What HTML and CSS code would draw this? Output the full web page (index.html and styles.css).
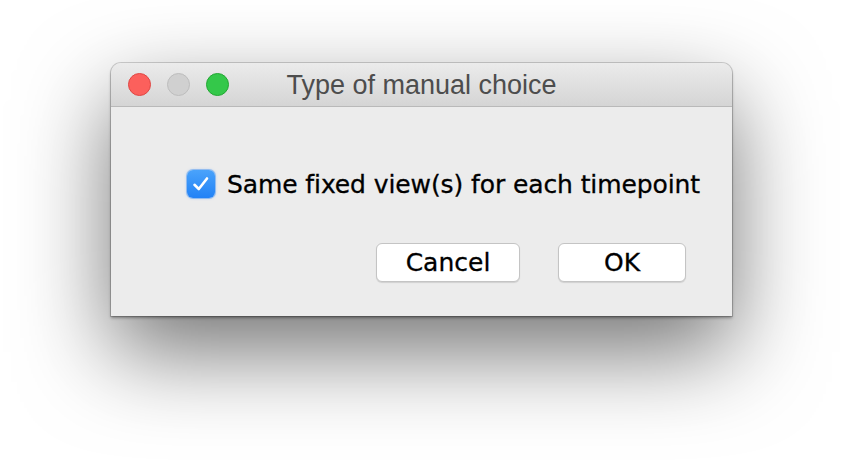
FILE: index.html
```html
<!DOCTYPE html>
<html>
<head>
<meta charset="utf-8">
<link rel="stylesheet" href="styles.css">
</head>
<body>
<div class="window">
  <div class="titlebar">
    <div class="lights">
      <span class="light red"></span>
      <span class="light gray"></span>
      <span class="light green"></span>
    </div>
    <div class="title">Type of manual choice</div>
    <div></div>
  </div>
  <div class="content">
    <label class="check-row">
      <span class="checkbox">
        <svg width="20" height="20" viewBox="0 0 20 20"><path d="M3.5 10.8 L7.8 15 L16 4.5" fill="none" stroke="#fff" stroke-width="2.6" stroke-linecap="round" stroke-linejoin="round"/></svg>
      </span>
      <span class="check-label">Same fixed view(s) for each timepoint</span>
    </label>
    <div class="buttons">
      <button class="btn cancel">Cancel</button>
      <button class="btn ok">OK</button>
    </div>
  </div>
</div>
</body>
</html>
```
FILE: styles.css
```css
html, body {
  margin: 0;
  padding: 0;
  background: #ffffff;
}
body {
  padding: 63px 0 0 111px;
  height: 476px;
  box-sizing: border-box;
  overflow: hidden;
}
.window {
  width: 621px;
  background: #ececec;
  border-radius: 10px 10px 0 0;
  box-shadow: 0 36px 90px rgba(0, 0, 0, 0.55), 0 0 0 1px rgba(0, 0, 0, 0.16), 0 2px 3px rgba(0,0,0,0.35);
}
.titlebar {
  height: 43px;
  border-bottom: 1px solid #b9b9b9;
  border-radius: 10px 10px 0 0;
  background: linear-gradient(#ebebeb, #d5d5d5);
  display: grid;
  grid-template-columns: 1fr auto 1fr;
  align-items: center;
}
.lights {
  display: flex;
  gap: 16px;
  padding-left: 17px;
}
.light {
  width: 23px;
  height: 23px;
  border-radius: 50%;
  box-sizing: border-box;
}
.red { background: #fc605c; border: 1px solid #df4744; }
.gray { background: #d0d0d0; border: 1px solid #bdbdbd; }
.green { background: #34c84a; border: 1px solid #23a733; }
.title {
  font-family: "Liberation Sans", Arial, sans-serif;
  font-size: 27px;
  color: #4d4d4d;
  padding-top: 2px;
}
.content {
  display: flex;
  flex-direction: column;
  padding: 62px 46px 34px 75px;
}
.check-row {
  display: flex;
  align-items: center;
  gap: 12px;
  height: 30px;
  white-space: nowrap;
}
.checkbox {
  flex: none;
  width: 28px;
  height: 28px;
  margin-left: 1px;
  border-radius: 6px;
  background: linear-gradient(#4aa3fb, #2282f6);
  box-shadow: 0 0 0 1px rgba(40, 130, 240, 0.35), 0 0 3px rgba(60, 150, 255, 0.5);
  display: flex;
  align-items: center;
  justify-content: center;
}
.check-label {
  font-family: "DejaVu Sans", Verdana, sans-serif;
  font-size: 25px;
  color: #000;
  letter-spacing: -0.1px;
  -webkit-text-stroke: 0.3px #000;
}
.buttons {
  display: flex;
  justify-content: flex-end;
  gap: 38px;
  margin-top: 44px;
}
.btn {
  height: 39px;
  background: #ffffff;
  border: 1px solid #c4c4c4;
  border-radius: 6px;
  box-shadow: 0 1px 1px rgba(0, 0, 0, 0.12);
  font-family: "DejaVu Sans", Verdana, sans-serif;
  font-size: 25px;
  color: #000;
  -webkit-text-stroke: 0.3px #000;
  padding: 0;
}
.cancel { width: 144px; }
.ok { width: 128px; }
```
